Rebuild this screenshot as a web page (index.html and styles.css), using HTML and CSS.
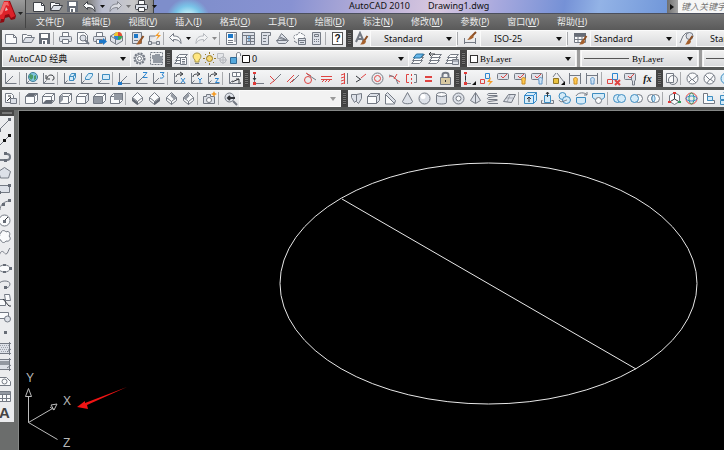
FILE: index.html
```html
<!DOCTYPE html>
<html lang="zh-CN">
<head>
<meta charset="utf-8">
<meta name="viewport" content="width=device-width, initial-scale=1">
<title>AutoCAD 2010 - Drawing1.dwg</title>
<link rel="stylesheet" href="styles.css">
</head>
<body>
<svg class="sprite" aria-hidden="true">
  <symbol id="new" viewBox="0 0 15 15"><path class="wf" d="M2.500 3.500h8l3 3v6h-11z"/><path d="M10.500 3.500v3h3"/></symbol>
  <symbol id="open" viewBox="0 0 15 15"><path class="wf" d="M2.500 11.500v-8h4l1 1h4v2"/><path class="lf" d="M2.500 11.500l3-5h9l-3 5z"/></symbol>
  <symbol id="save" viewBox="0 0 15 15"><path class="df" d="M2 2h11v11h-11z"/><path class="wh" d="M4 3h7v4h-7zM5 9h5v4h-5z"/><path class="df" d="M6 10h2v3h-2z"/></symbol>
  <symbol id="print" viewBox="0 0 15 15"><path class="wf" d="M4.500 5.500v-4h6v4"/><rect class="lf" x="1.500" y="5.500" width="12" height="5" rx="1"/><path class="wf" d="M4.500 8.500h6v4h-6z"/></symbol>
  <symbol id="undo" viewBox="0 0 15 15"><path class="wf" d="M1.500 6.500l4-4v2.500c5 0 7.500 2 7.500 7.500-1.500-3-3.500-4-7.500-4v2z"/></symbol>
  <symbol id="redo" viewBox="0 0 15 15"><path class="wf" d="M13.500 6.500l-4-4v2.500c-5 0-7.500 2-7.500 7.500 1.500-3 3.500-4 7.500-4v2z"/></symbol>
  <symbol id="axes" viewBox="0 0 15 15"><path d="M2.500 2v10.500h11M2.500 12.500l3-3"/></symbol>
  <symbol id="cube" viewBox="0 0 15 15"><path class="wf" d="M1.500 5.500l3-3h9v7l-3 3h-9z"/><path d="M1.500 5.500h9v7M10.500 5.500l3-3"/></symbol>
  <symbol id="iso" viewBox="0 0 15 15"><path class="wf" d="M7.500 1.500l5 5v3l-5 4-5-4v-3z"/><path d="M2.500 6.500l5 4 5-4M7.500 10.500v3"/></symbol>
  <symbol id="layers" viewBox="0 0 15 15"><path class="wf" d="M1.500 12.500l3-3h8l-3 3zM2.500 9.500l3-3h8l-3 3zM3.500 6.500l3-3h8l-3 3z"/></symbol>
  <symbol id="brush" viewBox="0 0 15 15"><path class="brown" d="M13.500 5l-3.500 5"/><path class="brownf" d="M10.500 8.500l1.500 2c-1 3-3 3-6 3 2-1 1.500-4 4.500-5z"/></symbol>
  <symbol id="tag" viewBox="0 0 15 15"><rect class="lf" x="1.500" y="2.500" width="11" height="6" rx="1"/><path class="r" d="M5 5l2 2 4-4"/></symbol>
  <symbol id="caret" viewBox="0 0 7 15"><path class="bk" d="M1 6h5l-2.500 3z"/></symbol>
</svg>

<header class="top">
  <button class="app" aria-label="应用程序菜单"><svg width="26" height="27"><path fill="#8e0a10" d="M0 22l1-5 5-17h4l6 15-1 3-4 1-2-3-4 1-1 4z"/><path fill="#dd2229" d="M0 18v-7l4-11h5l6 15-4 2-2-4-4 1-1 4z"/><path fill="#f4696a" d="M4 1h4l1 4-3-1-4 9-2 1v-3z"/><path fill="#d9c4c4" d="M5 10l1-4 2 3z"/><path fill="#222" d="M18 11h5l-2.500 3z"/></svg></button>
  <div class="titlebar">
    <nav class="quick" aria-label="快速访问">
      <button aria-label="新建"><svg><use href="#new"/></svg></button>
      <button aria-label="打开"><svg><use href="#open"/></svg></button>
      <button aria-label="保存"><svg><use href="#save"/></svg></button>
      <button aria-label="放弃"><svg><use href="#undo"/></svg></button>
      <button class="drop" aria-label="放弃列表"><svg><use href="#caret"/></svg></button>
      <button class="dim" aria-label="重做"><svg><use href="#redo"/></svg></button>
      <button class="drop dim" aria-label="重做列表"><svg><use href="#caret"/></svg></button>
      <button aria-label="打印"><svg><use href="#print"/></svg></button>
      <button class="drop" aria-label="自定义"><svg><use href="#caret"/></svg></button>
    </nav>
    <h1 class="title"><span>AutoCAD 2010</span><span>Drawing1.dwg</span></h1>
    <button class="find" aria-label="展开搜索"><svg><path class="bk" d="M1 3l4 3-4 3z"/></svg></button>
    <input class="search" aria-label="搜索" placeholder="键入关键字或短语">
  </div>
  <nav class="menu" aria-label="菜单">
    <a href="#">文件(<u>F</u>)</a><a href="#">编辑(<u>E</u>)</a><a href="#">视图(<u>V</u>)</a><a href="#">插入(<u>I</u>)</a><a href="#">格式(<u>O</u>)</a><a href="#">工具(<u>T</u>)</a><a href="#">绘图(<u>D</u>)</a><a href="#">标注(<u>N</u>)</a><a href="#">修改(<u>M</u>)</a><a href="#">参数(<u>P</u>)</a><a href="#">窗口(<u>W</u>)</a><a href="#">帮助(<u>H</u>)</a>
  </nav>
</header>

<div class="rows">
<div class="row">
  <div class="bar">
    <button aria-label="新建"><svg><use href="#new"/></svg></button>
    <button aria-label="打开"><svg><use href="#open"/></svg></button>
    <button aria-label="保存"><svg><use href="#save"/></svg></button>
    <i class="sep"></i>
    <button aria-label="打印"><svg><use href="#print"/></svg></button>
    <button aria-label="打印预览"><svg><path class="wf" d="M2.500 1.500h7l3 3v8h-10z"/><circle class="lf" cx="8" cy="7" r="3"/><path class="hv" d="M10 9l4 4"/></svg></button>
    <button aria-label="发布"><svg><use href="#print"/><path class="bf" d="M7 9h4v-2l4 3.500-4 3.500v-2h-4z"/></svg></button>
    <button aria-label="三维打印"><svg><path class="lf" d="M1.500 5l6-3.500 6 3.500v5l-6 3.500-6-3.500z"/><circle fill="#f3c52e" stroke="none" cx="9" cy="5" r="4"/><path fill="#32a45c" stroke="none" d="M9 5v4a4 4 0 0 0 4-4z"/><path fill="#2d83d6" stroke="none" d="M9 5h-4a4 4 0 0 0 4 4z"/><path fill="#e04a3c" stroke="none" d="M9 5h4a4 4 0 0 0-4-4z"/><path d="M1.500 5l5 3v5"/></svg></button>
    <i class="sep"></i>
    <button aria-label="特性匹配表"><svg><path class="lf" d="M2.500 1.500h9v11h-9z"/><path class="bf" d="M4 3h4v4h-4z"/><path d="M4 9.500h4"/><use href="#brush"/></svg></button>
    <button aria-label="块编辑器"><svg><path class="lf" d="M1.500 10.500h3v3h-3zM9.500 10.500h3v3h-3zM2.500 10v-5h6M5 12h4"/><path class="of" d="M13 0l-5 5h3l-2 4 5-5h-3z"/></svg></button>
    <i class="sep"></i>
    <button aria-label="放弃"><svg><use href="#undo"/></svg></button>
    <button class="drop" aria-label="放弃列表"><svg><use href="#caret"/></svg></button>
    <button class="dim" aria-label="重做"><svg><use href="#redo"/></svg></button>
    <button class="drop dim" aria-label="重做列表"><svg><use href="#caret"/></svg></button>
    <i class="sep"></i>
    <button aria-label="特性"><svg><path class="wf" d="M2.500 1.500h10v12h-10z"/><path class="bf" d="M4 3h5v4h-5z"/><path d="M4 9.500h5M4 11.500h5M11 3v8"/></svg></button>
    <button aria-label="设计中心"><svg><path class="lf" d="M1.500 1.500h12v12h-12zM1.500 4.500h12M5.500 4.500v9M9.500 4.500v9M5.500 7.500h8M5.500 10.500h8"/><path class="b" d="M7 6h2M7 9h2"/></svg></button>
    <button aria-label="工具选项板"><svg><path class="lf" d="M3.500 1.500h9v3h-2v9h-7z"/><path d="M5 4.500h4M5 7.500h3M5 10.500h3"/></svg></button>
    <button aria-label="图纸集"><svg><path class="lf" d="M1.500 9.500l3-2 9 2-3 3h-7zM3.500 7.500l3-5 6 6"/><path d="M5 6l7 3M1.500 9.500h10"/></svg></button>
    <button aria-label="标记集"><svg><path class="wf" stroke-dasharray="2 1" d="M3 8c-3-2 0-5 2-4 1-3 4-3 5-1 3 0 3 3 2 4"/><path class="lf" d="M6.500 7.500h7v6h-7z"/><path d="M6.500 9.500h7M8 11.500h4M2 10l3 2"/></svg></button>
    <button aria-label="计算器"><svg><path class="lf" d="M3.500 1.500h8v12h-8zM5.500 3.500h4v2h-4z"/><path stroke-dasharray="1 1" d="M5 8.500h5M5 10.500h5"/></svg></button>
    <i class="sep"></i>
    <button class="q" aria-label="帮助"><span>?</span></button>
  </div>
  <i class="grip"></i>
  <div class="bar grow">
    <button aria-label="文字样式"><svg><path class="hv" d="M2 11l4-9 4 9M4 8h4"/><use href="#brush"/></svg></button>
    <label class="combo style"><select aria-label="文字样式名"><option>Standard</option></select></label>
    <i class="sep"></i>
    <button class="wide" aria-label="标注样式"><svg><path d="M1.500 7v6M12.500 7v6M2 11.500h10"/><path class="brown" d="M13 1l-4 4"/><path class="brownf" d="M9 4l2 2c-2 2-4 3-7 3 2-1 3-5 5-5z"/></svg></button>
    <label class="combo style"><select aria-label="标注样式名"><option>ISO-25</option></select></label>
    <i class="sep"></i>
    <button class="wide" aria-label="表格样式"><svg><path class="wf" d="M1.500 2.500h11v9h-11zM1.500 5.500h11M1.500 8.500h11M5 5v6M9 5v6"/><path class="df" d="M1 2h12v3h-12z"/><use href="#brush"/></svg></button>
    <label class="combo style near"><select aria-label="表格样式名"><option>Standard</option></select></label>
    <button class="wide" aria-label="多重引线样式"><svg><path d="M1 12l3-7 3-3h4"/><circle class="lf" cx="10.500" cy="5" r="3.500"/><use href="#brush"/></svg></button>
    <label class="combo style"><select aria-label="多重引线样式名"><option>Standard</option></select></label>
  </div>
</div>

<div class="row">
  <label class="combo space"><select aria-label="工作空间"><option>AutoCAD 经典</option></select></label>
  <div class="bar">
    <button aria-label="工作空间设置"><svg><circle class="lf" cx="7.500" cy="7.500" r="5" stroke-width="2" stroke-dasharray="2 1"/><circle class="wf" cx="7.500" cy="7.500" r="4"/><circle class="wf" cx="7.500" cy="7.500" r="2"/></svg></button>
    <button aria-label="我的工作空间"><svg><path stroke-dasharray="2 1" d="M1.500 1.500h12v12h-12z"/><path class="mf" d="M3 4h3v-1h5v2h2v7h-9v-4h-1z"/></svg></button>
  </div>
  <i class="grip"></i>
  <div class="bar">
    <button aria-label="图层特性管理器"><svg><use href="#layers"/><path class="wf" d="M7.500 6.500h6v7h-6zM9 8.500h3M9 10.500h3M9 12h3"/></svg></button>
  </div>
  <div class="combo layer">
    <svg class="status" width="61" height="15"><path fill="#ffe680" stroke="#a99645" d="M5 9c-4-4-1-7 2-7s6 3 2 7v2h-4z"/><path d="M5 12.500h4"/><g class="sun"><circle cx="19.500" cy="7.500" r="3"/><path d="M19.500 1v2M19.500 12v2M13 7.500h2M24 7.500h2M15 3l1 1M23 11l1 1M24 3l-1 1M16 11l-1 1"/></g><g opacity=".4"><path class="lf" d="M27.500 2.500h6v5h-6z"/><circle class="lf" cx="33" cy="9" r="3"/><path d="M33 5v8M29 9h8"/></g><path class="wf" d="M46.500 7v-4c0-2 4-2 4 0v2"/><path fill="#55a8dc" stroke="#316b96" d="M40.500 6.500h6v6h-6z"/><path fill="#fff" stroke="#111" d="M52.500 4.500h7v7h-7z"/></svg>
    <select aria-label="图层"><option>0</option></select>
  </div>
  <div class="bar">
    <button aria-label="置为当前"><svg><use href="#layers"/><path fill="#68b7e9" stroke="#26719f" d="M3.500 7l3-4h7l-3 4z"/></svg></button>
    <button aria-label="上一个图层"><svg><use href="#layers"/><path class="k" d="M8 3h-6M4 1l-2 2 2 2"/></svg></button>
    <button aria-label="图层状态"><svg><use href="#layers"/><path class="lf" d="M8.500 8.500h6v5h-6zM8.500 10h6"/></svg></button>
  </div>
  <i class="grip"></i>
  <div class="combo prop color"><i class="swatch"></i><select aria-label="颜色"><option>ByLayer</option></select></div>
  <i class="split"></i>
  <div class="combo prop ltype"><i class="line"></i><select aria-label="线型"><option>ByLayer</option></select></div>
  <i class="split"></i>
  <div class="combo prop ltype"><i class="line"></i><select aria-label="线宽"><option>ByLayer</option></select></div>
</div>

<div class="row">
  <div class="bar">
    <button aria-label="UCS"><svg><use href="#axes"/><path d="M5 10l5-5"/></svg></button>
    <i class="sep"></i>
    <button aria-label="世界 UCS"><svg><use href="#axes"/><circle fill="#7fc6df" stroke="#427f9b" cx="9" cy="6" r="4.500"/><path fill="#4c9b67" stroke="none" d="M6 3l3 1v3l-2 2-2-3zM10 5l2-1v4l-2 1z"/></svg></button>
    <button aria-label="上一个 UCS"><svg><use href="#axes"/><path class="k" d="M6 7c1-4 7-4 7 0 0 2-1 2-2 2M5 4v4h4"/></svg></button>
    <i class="sep"></i>
    <button aria-label="面 UCS"><svg><use href="#axes"/><path class="bl" d="M7.500 5.500l2-3h4l-2 3zM7.500 5.500h4v4h-4zM11.500 5.500l2-3v4l-2 3"/></svg></button>
    <button aria-label="对象 UCS"><svg><use href="#axes"/><path class="bl" d="M6.500 8.500v-2l3-4h4v2l-3 4z"/></svg></button>
    <button aria-label="视图 UCS"><svg><use href="#axes"/><path class="bl" d="M6.500 3.500h7v5h-7z"/></svg></button>
    <i class="sep"></i>
    <button aria-label="原点"><svg><use href="#axes"/><path d="M4 11l6-6"/><path class="bf" d="M1 11h4v3h-4z"/></svg></button>
    <button aria-label="Z 轴矢量"><svg><use href="#axes"/><path d="M4 11l6-6"/><path class="b" d="M9 1.500h4l-4 5h4.500"/></svg></button>
    <button aria-label="三点"><svg><use href="#axes"/><path d="M4 11l4-4"/><path class="b" d="M9 1.500h4l-2 2.500c3 0 2 4-2 3"/></svg></button>
    <i class="sep"></i>
    <button aria-label="X"><svg><use href="#axes"/><path class="k" d="M4 6c0-3 3-3 6-3M8 1l3 2-3 2"/><path class="b" d="M9 7l4 5M13 7l-4 5"/></svg></button>
    <button aria-label="Y"><svg><use href="#axes"/><path class="k" d="M4 6c0-3 3-3 6-3M8 1l3 2-3 2"/><path class="b" d="M9 7l2 2 2-2M11 9v3"/></svg></button>
    <button aria-label="Z"><svg><use href="#axes"/><path class="k" d="M4 6c0-3 3-3 6-3M8 1l3 2-3 2"/><path class="b" d="M9 7.500h3.500l-3 4h4"/></svg></button>
    <i class="sep"></i>
    <button aria-label="应用 UCS"><svg><use href="#axes"/><path class="wf" d="M5.500 1.500h8v4h-8zM9.500 1.500v4"/><path class="k" d="M5 11l7-3M9 8h3v3M11 12h3"/></svg></button>
  </div>
  <i class="grip"></i>
  <div class="bar">
    <button aria-label="重合"><svg><path d="M3.500 3v9M4 12.500h9"/><path class="rf" d="M2 1h3v2h-3zM2 11h3v3h-3z"/><path class="k" d="M3.500 5v4M2 7l1.500 2 1.500-2"/></svg></button>
    <button aria-label="垂直"><svg><path d="M5 11l8-8"/><path class="r" d="M2 5l5 5M2 13l5-4"/></svg></button>
    <button aria-label="平行"><svg><path class="r" d="M2 11l7-7M5 12l4-4"/><path d="M7 11l7-7"/></svg></button>
    <button aria-label="相切"><svg><circle class="r" cx="6" cy="9" r="3.500"/><path d="M5 3l9 6"/><path class="r" d="M4 2l5 3"/></svg></button>
    <button aria-label="水平"><svg><path class="r" d="M2 5.500h11M2 8.500h11M3 11l2-2M6 11l2-2M9 11l2-2"/></svg></button>
    <button aria-label="竖直"><svg><path class="r" d="M8.500 2v11M5 4l3-1M5 7l3-1M5 10l3-1M5 13l3-1"/><path d="M11.500 2v11"/></svg></button>
    <button aria-label="共线"><svg><path class="k" d="M3 5l4 3M3 11l5-3"/><path class="r" d="M8 7l5-4"/></svg></button>
    <button aria-label="同心"><svg><circle cx="7.500" cy="7.500" r="5.500"/><circle class="r" cx="7.500" cy="7.500" r="3"/></svg></button>
    <button aria-label="平滑"><svg><path class="r" d="M2 6c5-3 5 2 11 5M10 3l-3 5"/><path d="M2 4l5 2M9 8l2 5"/></svg></button>
    <button aria-label="对称"><svg><path class="r" d="M5 3.500h-2.500v8h2.500M7.500 3v2M7.500 7v2M7.500 11v2"/><path d="M10 3.500h2.500v8h-2.500"/></svg></button>
    <button aria-label="相等"><svg><path class="r2" d="M4 6h7M4 10h7"/></svg></button>
    <button aria-label="固定"><svg><path class="hv" d="M4.500 7v-3c0-3 6-3 6 0v3"/><path fill="#d8c9a1" d="M2.500 6.500h10v7h-10z"/><path class="k" d="M7.500 9v2"/></svg></button>
  </div>
  <i class="grip"></i>
  <div class="bar">
    <button aria-label="几何约束"><svg><path d="M3.500 3v9M4 12.500h5"/><path class="rf" d="M2 1h3v2h-3zM2 11h3v3h-3z"/><path class="k" d="M3.500 5v4"/><path class="bk" d="M14 10v4h-4z"/></svg></button>
    <button aria-label="自动约束"><svg><path class="r" d="M1.500 8.500h4v4h-4z"/><path class="b" d="M6.500 2.500h4v5h-4z"/><path class="of" d="M12 6l-4 5h3l-2 4 5-5h-3z"/></svg></button>
    <button aria-label="显示约束"><svg><use href="#tag"/></svg></button>
    <button aria-label="全部显示"><svg><use href="#tag"/><path fill="#ffc94f" stroke="#c68a20" d="M9 10c-1-2 0-3.500 1.500-3.500s2.500 1.500 1.500 3.500v3h-3z"/></svg></button>
    <button aria-label="全部隐藏"><svg><use href="#tag"/><path fill="#cfe3f5" stroke="#5c93c6" d="M9 10c-1-2 0-3.500 1.500-3.500s2.500 1.500 1.500 3.500v3h-3z"/></svg></button>
    <i class="sep"></i>
    <button aria-label="标注约束"><svg><path d="M2 6l3-4M6 2l7 9"/><path fill="#e9c23f" stroke="#8f7422" d="M2.500 7.500h5v5h-5z"/><path class="bk" d="M14 10v4h-4z"/></svg></button>
    <button aria-label="显示动态约束"><svg><path d="M1.500 2v11M12.500 2v11M2 4.500h10"/><path fill="#ffc94f" stroke="#c68a20" d="M6 10c-1-2 0-3.500 1.500-3.500s2.500 1.500 1.500 3.500v3h-3z"/></svg></button>
    <button aria-label="隐藏动态约束"><svg><path d="M1.500 2v11M12.500 2v11M2 4.500h10"/><path fill="#cfe3f5" stroke="#5c93c6" d="M6 10c-1-2 0-3.500 1.500-3.500s2.500 1.500 1.500 3.500v3h-3z"/></svg></button>
    <i class="sep"></i>
    <button aria-label="删除约束"><svg><path class="r" d="M1.500 8.500h5v4h-5z"/><path class="b" d="M6.500 2.500h5v6h-5z"/><path class="r2" d="M9 9l5 5M14 9l-5 5"/></svg></button>
    <button aria-label="约束设置"><svg><use href="#tag"/><path class="lf" d="M8.500 6v3l1 1v4h2v-4l1-1v-3"/></svg></button>
    <button class="fx" aria-label="参数管理器"><span>fx</span></button>
  </div>
  <i class="grip"></i>
  <div class="bar grow">
    <button aria-label="绘图次序"><svg><path class="wf" d="M2.500 2.500h7v9h-7z"/><circle cx="9" cy="9" r="4.500"/></svg></button>
    <i class="sep"></i>
    <button aria-label="受约束的动态观察"><svg><circle class="wf" cx="7.500" cy="7.500" r="5.500"/><path d="M3 4l4 5 6-5M4 11l3-3 4 4"/></svg></button>
    <button aria-label="自由动态观察"><svg><circle class="wf" cx="7.500" cy="7.500" r="5.500"/><path d="M3 4l5 5 4-5M5 12l3-4 4 3"/></svg></button>
    <button aria-label="连续动态观察"><svg><circle class="bl" cx="7.500" cy="7.500" r="5.500"/></svg></button>
  </div>
</div>

<div class="row">
  <div class="bar">
    <button aria-label="命名视图"><svg><path class="wf" d="M2.500 2.500h6l2 2v7h-8z"/><path class="k" d="M4 10l4-4M5 5h3"/><path class="lf" d="M7.500 7.500h6v5h-6z"/></svg></button>
    <i class="sep"></i>
    <button aria-label="俯视"><svg><use href="#cube"/><path class="df" d="M2 5l3-2.500h8l-3 2.500z"/></svg></button>
    <button aria-label="仰视"><svg><use href="#cube"/><path class="df" d="M2 12l3-3h8l-3 3z"/></svg></button>
    <button aria-label="左视"><svg><use href="#cube"/><path class="mf" d="M2 6l3-3v6l-3 3z"/></svg></button>
    <button aria-label="右视"><svg><use href="#cube"/><path class="lf" d="M10.500 5.500l3-3v7l-3 3z"/></svg></button>
    <button aria-label="前视"><svg><use href="#cube"/><path class="mf" d="M2 6h8v6h-8z"/></svg></button>
    <button aria-label="后视"><svg><use href="#cube"/><path class="mf" d="M5 3h8v6h-8z"/></svg></button>
    <i class="sep"></i>
    <button aria-label="西南等轴测"><svg><use href="#iso"/><path class="df" d="M2 7l5.500 4v3l-5.500-4z"/></svg></button>
    <button aria-label="东南等轴测"><svg><use href="#iso"/><path class="df" d="M13 7l-5.500 4v3l5.500-4z"/></svg></button>
    <button aria-label="东北等轴测"><svg><use href="#iso"/><path class="mf" d="M7.500 2l5 5-2 2-4-4z"/></svg></button>
    <button aria-label="西北等轴测"><svg><use href="#iso"/><path class="mf" d="M7.500 2l-5 5 2 2 4-4z"/></svg></button>
    <i class="sep"></i>
    <button aria-label="创建相机"><svg><path class="lf" d="M1.500 5.500h3v-2h4v2h4v7h-11z"/><circle class="wf" cx="7" cy="9" r="2.500"/><path class="of" d="M12 0l1 2 2 1-2 1-1 2-1-2-2-1 2-1z"/></svg></button>
    <i class="sep"></i>
    <button aria-label="上一个视图"><svg><circle class="lf" cx="6.500" cy="6.500" r="4.500"/><path class="hv" d="M10 10l4 4"/><path class="k2" d="M12 7h-7M7 5l-2 2 2 2"/></svg></button>
  </div>
  <label class="combo view"><select aria-label="视图控制" disabled><option></option></select></label>
  <i class="grip"></i>
  <div class="bar grow">
    <button aria-label="多段体"><svg><path class="lf" d="M2.500 3.500h5v6l-2 2-3-5zM7.500 3.500l5-1v5l-3 5-2-2z"/></svg></button>
    <button aria-label="长方体"><svg><path class="lf" d="M1.500 5.500l3-3h9v7l-3 3h-9z"/><path class="wf" d="M1.500 5.500h9v7h-9zM10.500 5.500l3-3"/></svg></button>
    <button aria-label="楔体"><svg><path class="wf" d="M2.500 3.500l9 8v1.500h-9z"/><path class="lf" d="M2.500 3.500l2-2 8 8-1 3z"/></svg></button>
    <button aria-label="圆锥体"><svg><path class="lf" d="M7.500 1.500l5 9c0 3-10 3-10 0z"/></svg></button>
    <button aria-label="球体"><svg><circle class="lf" cx="7.500" cy="7.500" r="5.500"/><circle class="wh" cx="6" cy="5.500" r="2.500"/></svg></button>
    <button aria-label="圆柱体"><svg><path class="lf" d="M2.500 3.500v8c0 2 10 2 10 0v-8"/><ellipse class="wf" cx="7.500" cy="3.500" rx="5" ry="2"/></svg></button>
    <button aria-label="圆环体"><svg><circle class="lf" cx="7.500" cy="7.500" r="5.500"/><circle class="wf" cx="7.500" cy="7.500" r="2.500"/></svg></button>
    <button aria-label="棱锥体"><svg><path class="lf" d="M7.500 1.500l5 8-5 3-5-3z"/><path d="M7.500 2v10"/></svg></button>
    <button aria-label="螺旋"><svg><path d="M12 2.500h-8c-2 0-2 2 0 2h7c2 0 2 1 0 1l-7 1c-2 0-2 2 0 2h7c2 0 2 1 0 1l-7 1c-2 0-2 2 0 2h9"/></svg></button>
    <button aria-label="平面曲面"><svg><path class="lf" d="M1.500 10.500l5-7h7l-4 8z"/><path opacity=".5" d="M4 7h7M8 4l-3 7"/></svg></button>
    <i class="sep"></i>
    <button aria-label="拉伸"><svg><path class="bl" d="M1.500 4.500l3-3h9v8l-3 3h-9z"/><path class="b" d="M1.500 4.500h9v8M10.500 4.500l3-3"/><path class="k" d="M6 11v-5M4 8l2-2 2 2"/></svg></button>
    <button aria-label="按住并拖动"><svg><path class="bl" d="M4.500 4.500h6v7h-6z"/><path d="M2.500 9.500h-1v3h12v-3h-2"/><path class="k" d="M7.500 6v-5M6 3l1.500-2 1.500 2"/></svg></button>
    <button aria-label="扫掠"><svg><circle class="bl" cx="5.500" cy="5" r="3.500"/><ellipse class="bl" cx="9.500" cy="9" rx="4" ry="3.500"/><path d="M2 9c2 4 6 0 8 0"/></svg></button>
    <button aria-label="旋转"><svg><path class="bl" d="M2.500 6.500h9v5c-2 2-7 2-9 0z"/><path d="M2 5c2-4 9-4 11-1M10 4h3v-3"/></svg></button>
    <button aria-label="放样"><svg><path class="bl" d="M1.500 2.500h12v4l-4 3h-4l-4-3z"/><circle class="wf" cx="7.500" cy="9.500" r="3"/></svg></button>
    <i class="sep"></i>
    <button aria-label="并集"><svg><circle class="bl" cx="5.500" cy="7.500" r="4"/><circle class="bl" cx="9.500" cy="7.500" r="4"/></svg></button>
    <button aria-label="差集"><svg><circle class="wf" cx="9.500" cy="7.500" r="4"/><circle class="bl" cx="5.500" cy="7.500" r="4"/></svg></button>
    <button aria-label="交集"><svg><circle class="wf" cx="5.500" cy="7.500" r="4"/><circle class="wf" cx="9.500" cy="7.500" r="4"/><path class="bl" d="M7.500 4c2 2 2 5 0 7-2-2-2-5 0-7z"/></svg></button>
    <i class="sep"></i>
    <button aria-label="三维移动"><svg><path class="wf" d="M2.500 4.500l5-3 5 3v6l-5 3-5-3z"/><path class="k" d="M7.500 2v6l5 3M7.500 8l-5 3"/><path class="rf" d="M6 1h3v2h-3zM1 10h3v2h-3z"/><path fill="#2c9b5c" stroke="none" d="M11 10h3v2h-3z"/></svg></button>
    <button aria-label="三维旋转"><svg><circle class="r" cx="7.500" cy="7.500" r="5.500"/><ellipse cx="7.500" cy="7.500" rx="2.500" ry="5.500" stroke="#2b9c65"/><ellipse class="b" cx="7.500" cy="7.500" rx="5.500" ry="2.500"/></svg></button>
    <button aria-label="三维对齐"><svg><path class="wf" d="M2.500 2.500h4v7h7v3h-11z"/><path class="bl" d="M6.500 5.500h5v4h-5z"/></svg></button>
    <button aria-label="三维阵列"><svg><path class="bl" d="M2.500 4.500h4v4h-4zM8.500 4.500h4v4h-4zM2.500 9.500h4v4h-4zM8.500 9.500h4v4h-4zM5.500 1.500h5"/></svg></button>
  </div>
</div>
</div>

<main class="work">
  <aside class="side" aria-label="绘图">
    <i class="cap"></i>
    <button aria-label="直线"><svg><path d="M2 13l10-10"/><path class="df" d="M11 1h3v3h-3zM1 12h3v3h-3z"/></svg></button>
    <button aria-label="构造线"><svg><path d="M2 13l11-11"/><path class="bk" d="M11 1h3v3h-3zM6 6h3v3h-3z"/></svg></button>
    <button aria-label="多段线"><svg><path class="hv" d="M2 11h8c4 0 4-6 0-6h-2"/><path class="df" d="M7 3h3v3h-3zM7 10h3v3h-3z"/></svg></button>
    <button aria-label="正多边形"><svg><path class="lf" d="M7.500 2.500l6 4-2 6.500h-8l-2-6.500z"/></svg></button>
    <button aria-label="矩形"><svg><path class="lf" d="M1.500 4.500h11v7h-11z"/><path class="df" d="M11 3h3v3h-3zM1 10h3v3h-3z"/></svg></button>
    <button aria-label="圆弧"><svg><path d="M3 13c0-5 4-9 10-9"/><path class="df" d="M11 2h3v3h-3zM5 6h3v3h-3z"/></svg></button>
    <button aria-label="圆"><svg><circle class="wf" cx="7.500" cy="7.500" r="5.500"/><path class="k" d="M7 8l4-4"/><path class="df" d="M6 7h3v3h-3z"/></svg></button>
    <button aria-label="修订云线"><svg><path class="wf" d="M4 4c0-3 4-3 5-1 3-2 5 2 3 4 3 3 0 6-3 5-2 3-5 1-5-1-3 0-4-3-1-4-1-1 0-3 1-3z"/></svg></button>
    <button aria-label="样条曲线"><svg><path d="M2 11c3-9 5-2 7-2s2-4 4-6"/></svg></button>
    <button aria-label="椭圆"><svg><ellipse class="wf" cx="7.500" cy="7.500" rx="5.500" ry="3.500"/><path class="df" d="M12 6h3v3h-3zM6 3h3v2h-3zM6 10h3v2h-3z"/></svg></button>
    <button aria-label="椭圆弧"><svg><path d="M2 7c1-4 11-4 11 0 0 3-3 4-5 4"/><path class="df" d="M7 9h3v3h-3z"/></svg></button>
    <button aria-label="插入块"><svg><path class="wf" d="M7.500 1.500h5l1 6h-5zM1.500 6.500h7v6h-7z"/><path class="k" d="M6 6l6 7h2"/></svg></button>
    <button aria-label="创建块"><svg><path class="wf" d="M1.500 3.500h10v6h-10z"/><circle class="lf" cx="10.500" cy="10" r="3"/></svg></button>
    <button aria-label="点"><svg><path class="df" d="M7 6h3v3h-3z"/></svg></button>
    <button aria-label="图案填充"><svg><path class="lf" d="M2.500 2.500h10v10h-10z"/><path stroke-dasharray="1 1" opacity=".6" d="M3 4.500h9M4 6.500h9M3 8.500h9M4 10.500h9"/><path d="M1 2.500h13M12.500 1v13M1 12.500h13M10 11l4-3"/></svg></button>
    <button aria-label="渐变色"><svg><path class="lf" d="M2.500 2.500h10v10h-10z"/><path class="mf" d="M3 4h9v4h-9z"/><path d="M1 2.500h13M12.500 1v13M1 12.500h13M10 11l4-3"/></svg></button>
    <button aria-label="面域"><svg><path class="wf" d="M1.500 12.500v-8h8l4 4v4z"/><circle class="wf" cx="7.500" cy="8.500" r="2.500"/></svg></button>
    <button aria-label="表格"><svg><path class="wf" d="M1.500 2.500h12v10h-12zM1.500 5.500h12M1.500 9.500h12M5.500 5v7M9.500 5v7"/><path class="mf" d="M2 3h11v2h-11z"/></svg></button>
    <button class="txt" aria-label="多行文字"><span>A</span></button>
  </aside>
  <section class="canvas" aria-label="绘图区">
    <svg viewBox="0 0 705 339" preserveAspectRatio="xMinYMin slice">
      <ellipse cx="469.500" cy="172.500" rx="208.500" ry="120.500"/>
      <path d="M323 88l294 170"/>
      <g class="ucs">
        <path d="M9.500 311.500v-26M9.500 311.500l24-14M9.500 311.500l29 17"/>
        <path d="M6.500 285.500l3-8 3 8zM32 294l6-1-3 6zM8 285.500h3M31 296l4 3"/>
        <text x="7" y="271">Y</text><text x="44" y="294">X</text><text x="44" y="336">Z</text>
      </g>
      <path class="arrow" d="M58 296l8-6v2l42-16-40 18 1 4z"/>
    </svg>
  </section>
</main>
</body>
</html>
```
FILE: styles.css
```css
* { box-sizing: border-box; }
body {
  margin: 0;
  min-height: 100vh;
  display: flex;
  flex-direction: column;
  overflow: hidden;
  background: #555756;
  color: #111;
  font: 9px/12px "Noto Sans", "Noto Sans CJK SC", sans-serif;
}
.sprite { display: none; }
button {
  flex: none;
  width: 17px;
  height: 100%;
  padding: 0;
  border: 0;
  background: none;
  display: flex;
  align-items: center;
  justify-content: center;
  font: inherit;
  color: inherit;
}
svg { flex: none; fill: none; stroke: #747a84; }
button svg { width: 15px; height: 15px; }
.drop { width: 9px; }
.drop svg { width: 7px; }
.dim { opacity: .45; }
.wide { width: 19px; }

/* icon paints */
.wf { fill: #fafbfc; }
.lf { fill: #dde1e8; }
.mf { fill: #9399a2; stroke: none; }
.df { fill: #666c76; stroke: none; }
.wh { fill: #fff; stroke: none; }
.bf { fill: #1d78c8; stroke: none; }
.rf { fill: #e03a38; stroke: none; }
.of { fill: #f49a24; stroke: none; }
.bk { fill: #111; stroke: none; }
.bl { fill: #d5ebf8; stroke: #3d8cc0; }
.b { stroke: #2d86d0; }
.r { stroke: #df4442; }
.r2 { stroke: #df4442; stroke-width: 2; }
.k { stroke: #33363b; }
.k2 { stroke: #33363b; stroke-width: 2; }
.hv { stroke-width: 2; }
.brown { stroke: #8a4d23; stroke-width: 2; }
.brownf { fill: #a5602c; stroke: none; }
.sun { fill: #f6d870; stroke: #9a7d2c; }

/* title and menu */
.top {
  display: grid;
  grid-template: 14px 16px / 26px 1fr;
  background: linear-gradient(#8c8c8c, #5a5a5a);
}
.app {
  grid-row: 1 / 3;
  width: 26px;
  height: 28px;
  background: linear-gradient(#9b9b9b, #5e5e5e);
  border-right: 1px solid #444;
}
.app svg { width: 26px; height: 27px; stroke: none; }
.titlebar {
  display: flex;
  min-width: 0;
  border-bottom: 1px solid #4b4f5c;
  background:
    radial-gradient(circle at 162px 20px, #c5f0f8 6px, #79c4e8 14px, transparent 22px),
    linear-gradient(100deg, #7e8ecb 22%, #8892d2 38%, #b9b0d8 50%, #d9c8e0 59%, #aaaade 67%, #7591d6 77%, #93b3e6 82%, #6d94d8 93%);
}
.quick {
  flex: none;
  display: flex;
  padding-left: 4px;
  width: 128px;
  border-right: 1px solid #444;
  background: linear-gradient(90deg, #878787 50%, #b9bdd0 60%, #c9c9ca 85%, #8a8a8a);
}
.quick svg { stroke: #3d4046; }
.title {
  flex: 1;
  display: flex;
  gap: 18px;
  margin: 0;
  padding-left: 195px;
  font: inherit;
  white-space: nowrap;
}
.find { width: 11px; background: linear-gradient(90deg, #6e6e6e, #a5a5a5); }
.find svg { width: 7px; height: 12px; }
.search {
  width: 46px;
  height: 13px;
  padding: 0 0 0 3px;
  border: 0;
  background: #f6f6f6;
  font: italic 9px/13px "Noto Sans", "Noto Sans CJK SC", sans-serif;
}
.search::placeholder { color: #777; }
.menu {
  display: flex;
  align-items: center;
  gap: 18px;
  padding-left: 10px;
  color: #ececec;
  white-space: nowrap;
}
.menu a { color: inherit; text-decoration: none; }

/* toolbars */
.rows { display: flex; flex-direction: column; gap: 3px; padding-bottom: 3px; }
.row { display: flex; height: 17px; padding-left: 2px; overflow: hidden; }
.bar {
  flex: none;
  display: flex;
  background: linear-gradient(#f4f5f6, #e4e5e7);
}
.grow { flex: 1 0 auto; }
.sep { flex: none; width: 4px; margin: 2px 0; border-left: 1px solid #a9abae; }
.grip {
  flex: none;
  width: 7px;
  border: 2px solid #454545;
  background: repeating-linear-gradient(#3b3b3b 0 1px, #747474 1px 2px);
}
.combo {
  position: relative;
  flex: none;
  display: flex;
  align-items: center;
  border: 1px solid #fafafa;
  background: linear-gradient(#f2f2f2, #d9dadc);
}
.combo::after {
  content: "";
  position: absolute;
  right: 4px;
  top: 6px;
  border: solid transparent;
  border-width: 4px 3px 0;
  border-top-color: #111;
  pointer-events: none;
}
select {
  appearance: none;
  flex: 1;
  min-width: 0;
  height: 15px;
  padding: 0 0 0 13px;
  border: 0;
  border-radius: 0;
  background: none;
  color: #111;
  font: inherit;
  opacity: 1;
}
.style { width: 87px; }
.near select { padding-left: 3px; }
.space { width: 129px; }
.space select { padding-left: 6px; }
.layer { width: 220px; }
.layer select { padding-left: 1px; }
.view { width: 102px; background: #f2f2f2; }
.view::after { border-top-color: #999; }
.prop select { font: 9px/12px "Liberation Serif", serif; color: #000; }
.color { width: 109px; }
.color select { padding-left: 2px; }
.swatch { width: 8px; height: 8px; margin-left: 2px; border: 1px solid #333; background: #fff; }
.ltype { width: 117px; }
.ltype select { padding-left: 3px; }
.line { width: 45px; margin-left: 2px; border-top: 1px solid #555; }
.split { flex: none; width: 5px; border: solid #eee; border-width: 0 1px; background: #9c9c9c; }
.q span { width: 11px; height: 13px; border: 1px solid #555; background: #fff; font: bold 10px/11px "Liberation Sans", sans-serif; }
.fx span { font: italic bold 10px/12px "Liberation Serif", serif; }

/* drawing area */
.work { flex: 1; display: flex; min-height: 0; background: #6b6d6c; }
.side {
  flex: none;
  align-self: flex-start;
  width: 14px;
  display: flex;
  flex-direction: column;
  align-items: flex-end;
  padding: 0 1px 2px 0;
  background: #ebecee;
  overflow: hidden;
}
.side button { height: 16px; }
.cap { align-self: stretch; height: 6px; margin-right: -1px; border: 2px solid #454545; background: #777; }
.txt span { font: bold 15px/15px "Liberation Sans", sans-serif; color: #444; }
.canvas {
  flex: 1;
  min-width: 0;
  margin-left: 4px;
  border: solid #858786;
  border-width: 1px 0 0 1px;
  background: #000;
}
.canvas svg { display: block; width: 100%; height: 100%; stroke: #e8e8e8; }
.ucs { stroke: #bdbdbd; }
.ucs text { fill: #b8b8b8; stroke: none; font: 12px "Liberation Sans", sans-serif; }
.canvas .arrow { fill: #f01414; stroke: none; }
```
